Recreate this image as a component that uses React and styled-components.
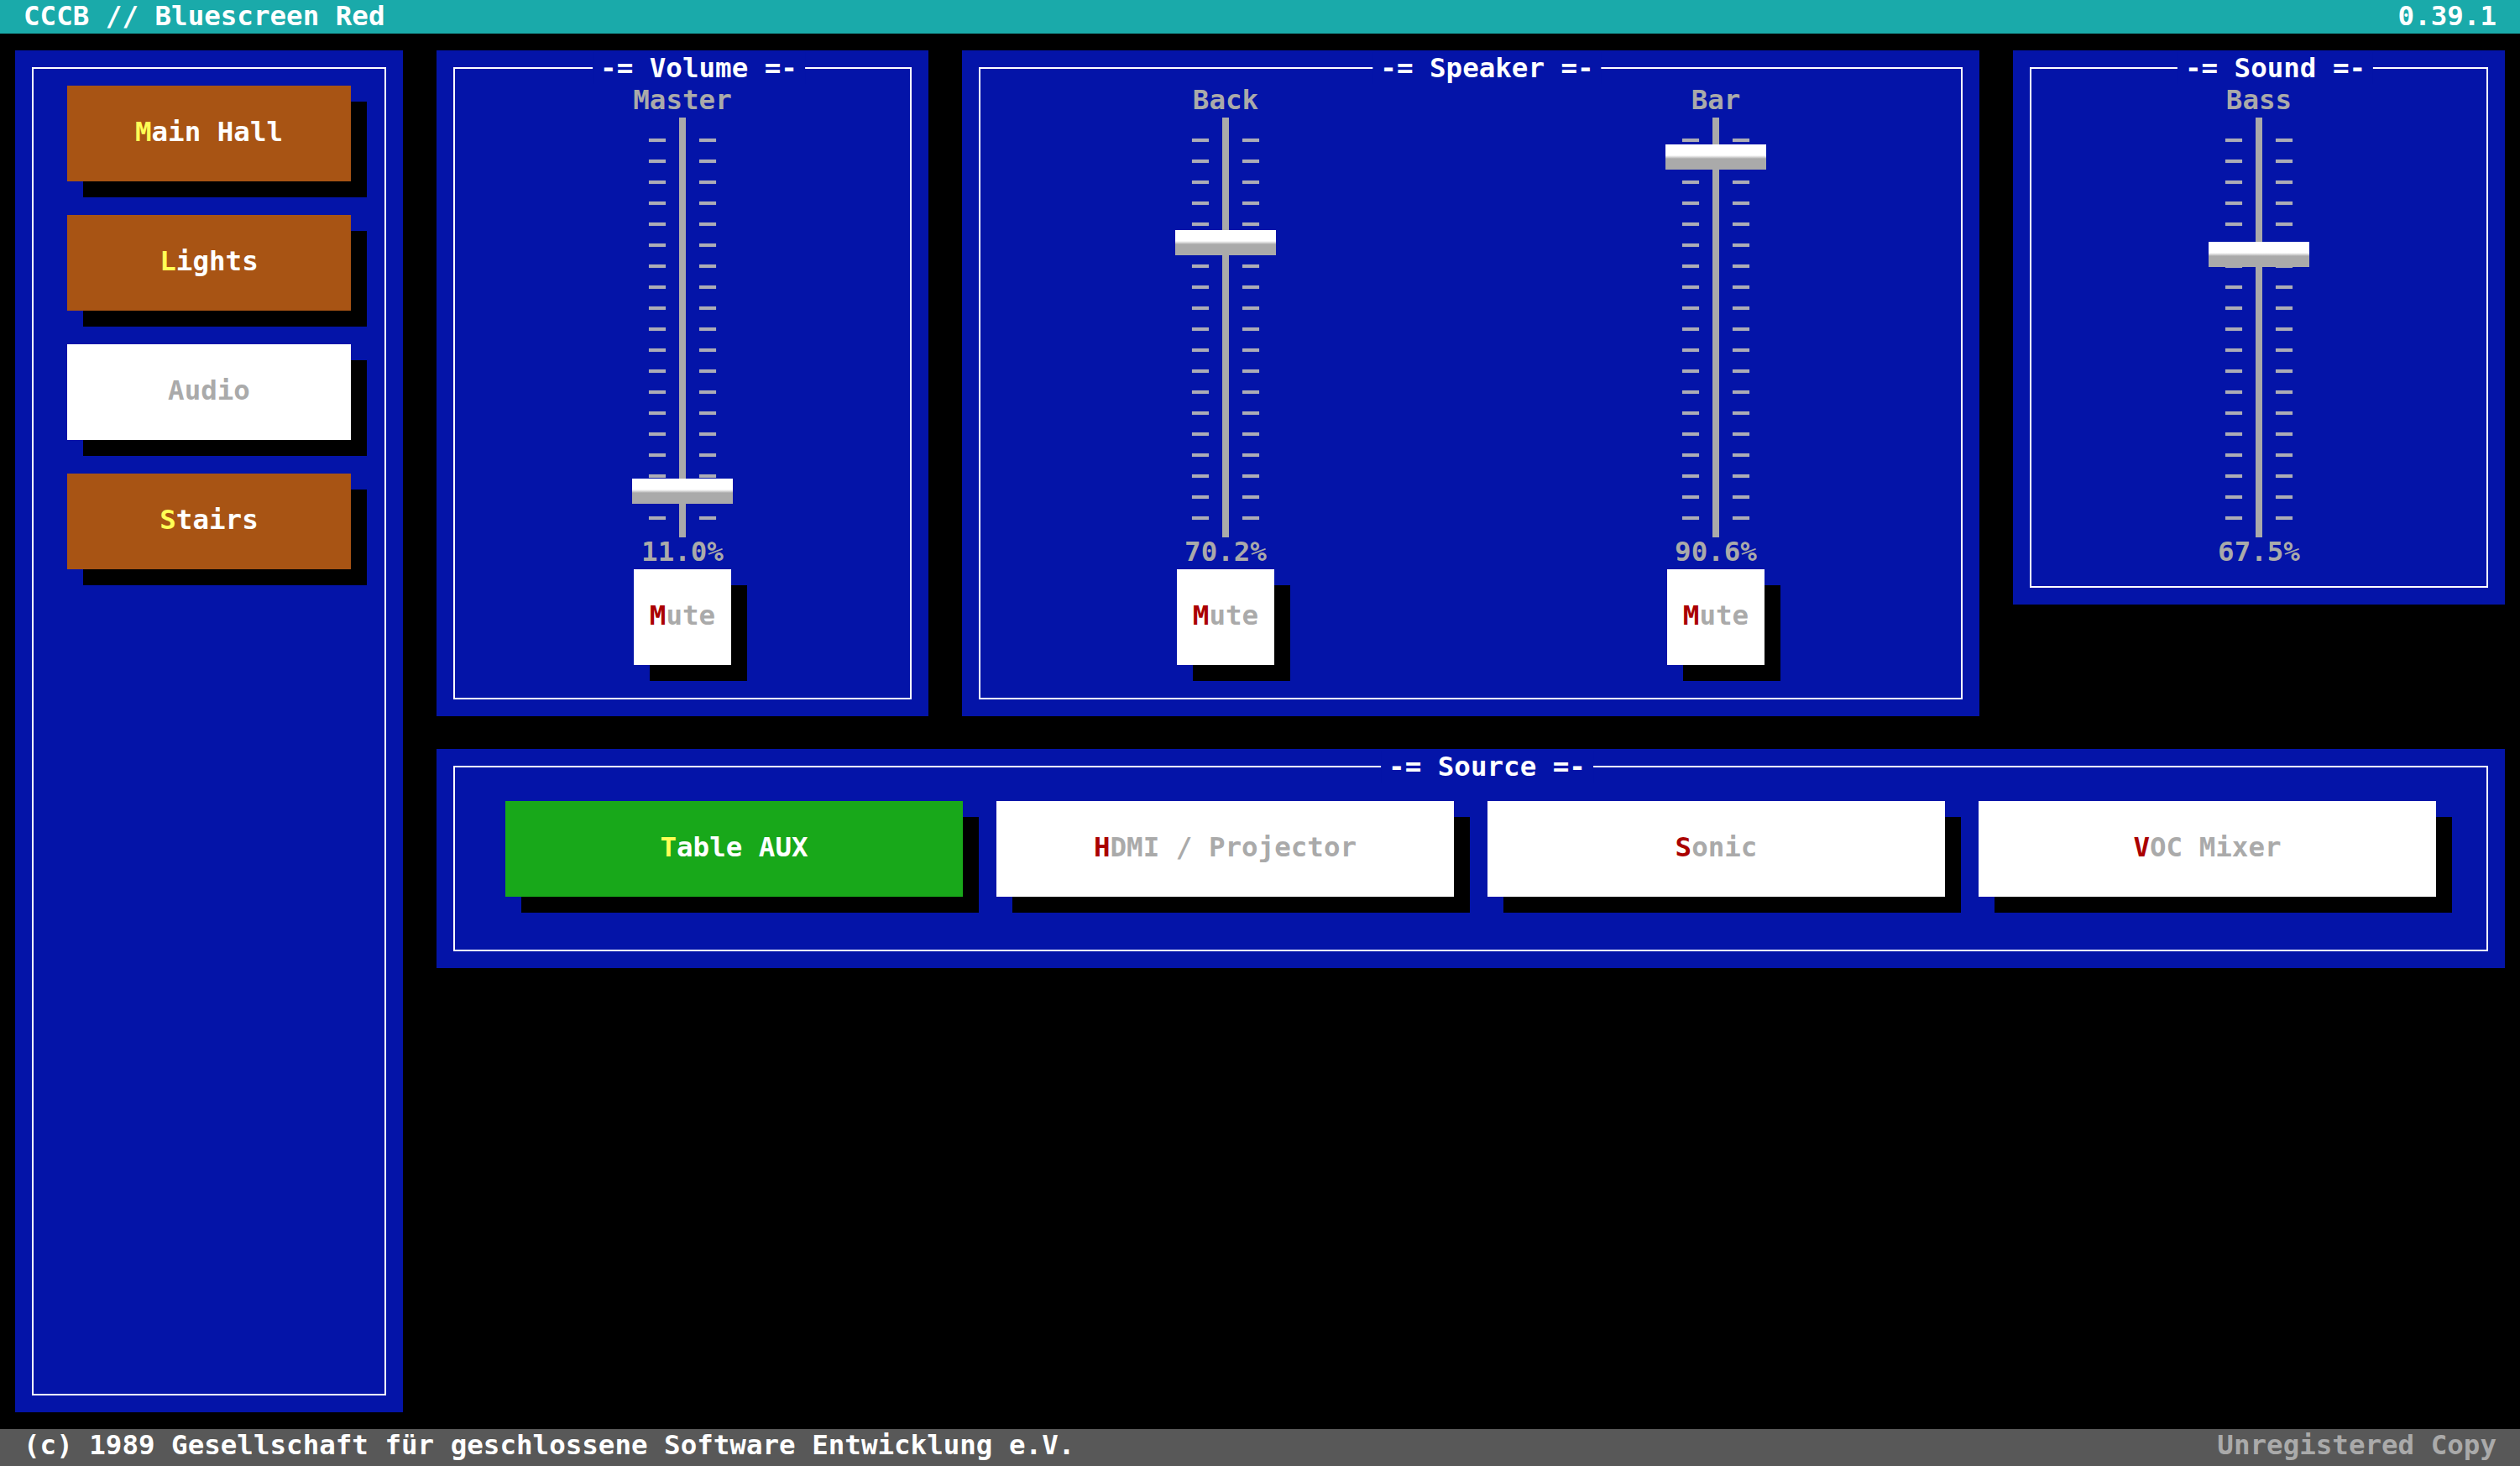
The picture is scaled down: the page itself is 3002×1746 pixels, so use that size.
import React from 'react';
import styled, { createGlobalStyle } from 'styled-components';

const palette = {
  blue: '#0414a8',
  teal: '#1aaaaa',
  brown: '#a85414',
  green: '#18a81a',
  gray: '#aaaaaa',
  red: '#aa0000',
  yellow: '#ffff55',
  white: '#ffffff',
  status: '#585858',
};

const GlobalStyle = createGlobalStyle`
  html, body {
    margin: 0;
    padding: 0;
    background: #000;
  }
  body {
    font-family: "DejaVu Sans Mono", "Liberation Mono", monospace;
    font-size: 32.5px;
    font-weight: bold;
    color: ${palette.white};
  }
  * { box-sizing: border-box; }
`;

const Screen = styled.div`
  height: 100vh;
  display: flex;
  flex-direction: column;
  overflow: hidden;
`;

const TitleBar = styled.header`
  flex: none;
  height: 40px;
  background: ${palette.teal};
  display: flex;
  justify-content: space-between;
  padding: 0 28px;
  line-height: 38px;
  white-space: pre;
`;

const StatusBar = styled.footer`
  flex: none;
  height: 44px;
  background: ${palette.status};
  display: flex;
  justify-content: space-between;
  padding: 0 28px;
  line-height: 38px;
  white-space: pre;
`;

const Notice = styled.span`
  color: ${palette.gray};
`;

const Workspace = styled.main`
  flex: 1;
  min-height: 0;
  display: flex;
  gap: 40px;
  padding: 20px 18px;
`;

const Panel = styled.section`
  background: ${palette.blue};
  padding: 20px;
  display: flex;
  flex-direction: column;
`;

const Sidebar = styled(Panel)`
  flex: none;
  width: 462px;
`;

const Frame = styled.div`
  position: relative;
  flex: 1;
  border: 2px solid ${palette.white};
  padding: ${(p) => p.$pad};
  display: flex;
  flex-direction: ${(p) => (p.$column ? 'column' : 'row')};
  gap: ${(p) => p.$gap || 0};
`;

/* the heading sits over the top border line */
const Legend = styled.h2`
  position: absolute;
  top: -20px;
  left: 50%;
  transform: translateX(calc(-50% + 19.5px));
  margin: 0;
  padding: 0 9px;
  background: ${palette.blue};
  font: inherit;
  line-height: 38px;
  white-space: pre;
`;

const Deck = styled.div`
  flex: 1;
  display: grid;
  grid-template-columns: 586px 1fr 586px;
  align-content: start;
  align-items: start;
  gap: 39px 40px;
`;

const SourcePanel = styled(Panel)`
  grid-column: 1 / -1;
`;

const Key = styled.button`
  font: inherit;
  border: 0;
  margin: 0;
  padding: 36px 19px 40px;
  line-height: 38px;
  text-align: center;
  white-space: pre;
  cursor: pointer;
  background: ${(p) =>
    p.$tone === 'brown' ? palette.brown : p.$tone === 'green' ? palette.green : palette.white};
  color: ${(p) => (p.$tone === 'white' ? palette.gray : palette.white)};
  box-shadow: 19px 19px 0 #000;
`;

const Hot = styled.span`
  color: ${(p) => (p.$tone === 'white' ? palette.red : palette.yellow)};
`;

const SourceRow = styled.div`
  flex: 1;
  display: flex;
  gap: 40px;
  padding-bottom: 19px;

  ${Key} {
    flex: 1;
  }
`;

const MuteKey = styled(Key)`
  margin-bottom: 19px;
`;

const Channel = styled.div`
  flex: 1;
  display: flex;
  flex-direction: column;
  align-items: center;
`;

const ChannelName = styled.div`
  color: ${palette.gray};
  line-height: 38px;
  margin-bottom: 2px;
`;

const Fader = styled.div`
  position: relative;
  width: 120px;
  height: 500px;
  display: flex;
  justify-content: center;
  gap: 16px;
`;

const TickColumn = styled.div`
  width: 20px;
  display: flex;
  flex-direction: column;
  gap: 21px;
  padding-top: 25px;
`;

const Tick = styled.span`
  display: block;
  height: 4px;
  background: #acacb6;
  box-shadow: 0 0 1px #8888aa;
`;

const Track = styled.div`
  width: 8px;
  background: ${palette.gray};
`;

const Knob = styled.div`
  position: absolute;
  left: 0;
  width: 120px;
  height: 30px;
  background: linear-gradient(#fff 0, #fff 13px, #d8d8d8 15px, #aaa 17px, #aaa 100%);
`;

const Level = styled.div`
  color: ${palette.gray};
  line-height: 35px;
  padding-bottom: 3px;
`;

const Label = ({ text, hot, tone }) =>
  hot ? (
    <>
      <Hot $tone={tone}>{text[0]}</Hot>
      {text.slice(1)}
    </>
  ) : (
    text
  );

const ticks = Array.from({ length: 19 });

const Slider = ({ name, value, mute }) => (
  <Channel>
    <ChannelName>{name}</ChannelName>
    <Fader>
      <TickColumn>
        {ticks.map((_, i) => (
          <Tick key={i} />
        ))}
      </TickColumn>
      <Track />
      <TickColumn>
        {ticks.map((_, i) => (
          <Tick key={i} />
        ))}
      </TickColumn>
      <Knob style={{ top: `${500 * (1 - value / 100) - 15}px` }} />
    </Fader>
    <Level>{value.toFixed(1)}%</Level>
    {mute && (
      <MuteKey $tone="white">
        <Label text="Mute" hot tone="white" />
      </MuteKey>
    )}
  </Channel>
);

const rooms = [
  { name: 'Main Hall', tone: 'brown', hot: true },
  { name: 'Lights', tone: 'brown', hot: true },
  { name: 'Audio', tone: 'white', hot: false },
  { name: 'Stairs', tone: 'brown', hot: true },
];

const sources = [
  { name: 'Table AUX', tone: 'green' },
  { name: 'HDMI / Projector', tone: 'white' },
  { name: 'Sonic', tone: 'white' },
  { name: 'VOC Mixer', tone: 'white' },
];

export default function App() {
  return (
    <>
      <GlobalStyle />
      <Screen>
        <TitleBar>
          <span>CCCB // Bluescreen Red</span>
          <span>0.39.1</span>
        </TitleBar>

        <Workspace>
          <Sidebar>
            <Frame $column $pad="20px 40px" $gap="40px">
              {rooms.map((r) => (
                <Key key={r.name} $tone={r.tone}>
                  <Label text={r.name} hot={r.hot} tone={r.tone} />
                </Key>
              ))}
            </Frame>
          </Sidebar>

          <Deck>
            <Panel>
              <Frame $pad="18px 0 20px">
                <Legend>-= Volume =-</Legend>
                <Slider name="Master" value={11.0} mute />
              </Frame>
            </Panel>

            <Panel>
              <Frame $pad="18px 0 20px">
                <Legend>-= Speaker =-</Legend>
                <Slider name="Back" value={70.2} mute />
                <Slider name="Bar" value={90.6} mute />
              </Frame>
            </Panel>

            <Panel>
              <Frame $pad="18px 0 20px">
                <Legend>-= Sound =-</Legend>
                <Slider name="Bass" value={67.5} />
              </Frame>
            </Panel>

            <SourcePanel>
              <Frame $pad="40px 60px 44px">
                <Legend>-= Source =-</Legend>
                <SourceRow>
                  {sources.map((s) => (
                    <Key key={s.name} $tone={s.tone}>
                      <Label text={s.name} hot tone={s.tone} />
                    </Key>
                  ))}
                </SourceRow>
              </Frame>
            </SourcePanel>
          </Deck>
        </Workspace>

        <StatusBar>
          <span>(c) 1989 Gesellschaft für geschlossene Software Entwicklung e.V.</span>
          <Notice>Unregistered Copy</Notice>
        </StatusBar>
      </Screen>
    </>
  );
}
